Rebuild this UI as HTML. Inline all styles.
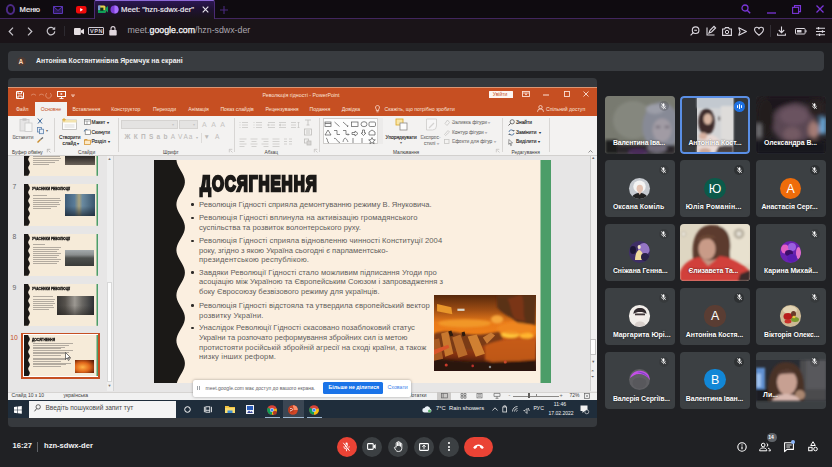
<!DOCTYPE html>
<html lang="uk">
<head>
<meta charset="utf-8">
<title>Meet: "hzn-sdwx-der"</title>
<style>
*{box-sizing:border-box;margin:0;padding:0}
html,body{width:832px;height:467px;overflow:hidden;background:#202124}
body{position:relative;font-family:"Liberation Sans",sans-serif;color:#fff;font-size:8px;line-height:1}
.a{position:absolute}
.t{position:absolute;white-space:nowrap;line-height:1}
svg{position:absolute;overflow:visible}
#tabbar{left:0;top:0;width:832px;height:19px;background:#0f0b10}
#addr{left:0;top:19px;width:832px;height:23.500px;background:#1a1418}
#banner{left:8px;top:51px;width:816px;height:19.500px;border-radius:4px;background:#393c40}
#share{left:8px;top:78.300px;width:588.500px;height:349.200px;border-radius:4px;background:#36393d;overflow:hidden}
#scr{left:0;top:7.700px;width:588.500px;height:332.500px;background:#36393d;overflow:hidden}
#o{left:-8px;top:-86px;width:832px;height:467px}
.tb{top:107.200px;font-size:5.100px;color:#fbe4da}
.rl{font-size:4.900px;color:#252423;-webkit-text-stroke:.12px #252423}
.gl{top:150.700px;font-size:4.800px;color:#3f3d3b}
.sep{top:118px;width:.6px;height:34px;background:#d8d6d4}
.bt{font-size:7.600px;color:#615d5b}
#fire{background:radial-gradient(ellipse 30% 18% at 78% 50%,#ffd773 0,#ffac33 40%,rgba(255,140,30,0) 100%),radial-gradient(ellipse 40% 25% at 30% 35%,#f7a23a 0,rgba(230,120,30,0) 100%),linear-gradient(180deg,#6a2a0c 0,#c8601c 22%,#e88a2a 40%,#b5521a 55%,#5a2a18 72%,#3a2018 100%)}
.p{position:absolute;width:70px;height:57.300px;border-radius:4px;background:#3c4043;overflow:hidden}
.p .n{position:absolute;left:0;right:0;bottom:6.300px;text-align:center;font-weight:bold;font-size:6.900px;white-space:nowrap;color:#fff;text-shadow:0 0 2px rgba(0,0,0,.7)}
.p .av{position:absolute;left:24.450px;top:17.600px;width:21.400px;height:21.400px;border-radius:50%;overflow:hidden;text-align:center;font-size:12.400px;line-height:22.200px;color:#fff}
.p .m{position:absolute;left:54.300px;top:5px;width:10px;height:10px;border-radius:50%;background:rgba(32,33,36,.5)}
</style>
</head>
<body>
<svg width="0" height="0" style="left:0;top:0"><defs><filter id="vb" x="-20%" y="-20%" width="140%" height="140%"><feGaussianBlur stdDeviation="2.200"/></filter><filter id="vb3" x="-20%" y="-20%" width="140%" height="140%"><feGaussianBlur stdDeviation=".55"/></filter><filter id="vb4" x="-20%" y="-20%" width="140%" height="140%"><feGaussianBlur stdDeviation="1.500"/></filter><filter id="vb2" x="-20%" y="-20%" width="140%" height="140%"><feGaussianBlur stdDeviation="1"/></filter></defs></svg>
<div class="a" id="tabbar">
 <div class="a" style="left:0;top:17.5px;width:832px;height:1.100px;background:#42265f"></div>
 <div class="a" style="left:93.5px;top:0;width:121.5px;height:19px;background:linear-gradient(180deg,#2b1652 0,#1f1233 45%,#1a1418 100%);border:1.100px solid #4a2a74;border-top:1.300px solid #8c68d6;border-bottom:none;border-radius:2px 2px 0 0"></div>
 <svg style="left:4.5px;top:4px" width="11" height="11" viewBox="0 0 11 11"><ellipse cx="5.5" cy="5.5" rx="3.6" ry="4.4" fill="none" stroke="#4c2a86" stroke-width="2"/></svg>
 <div class="t" style="left:19.5px;top:5.600px;font-size:7.600px;color:#f1eef4;-webkit-text-stroke:.2px #f1eef4">Меню</div>
 <svg style="left:53px;top:5.5px" width="10" height="8" viewBox="0 0 10 8"><path d="M0.5 0.5h9v7h-9z M0.5 0.5l4.5 4 4.5-4" fill="#2a1a55" stroke="#5a35b5" stroke-width="1"/></svg>
 <svg style="left:76px;top:5.5px" width="10.5" height="7.5" viewBox="0 0 10.5 7.5"><rect width="10.5" height="7.5" rx="2" fill="#f00a0a"/><path d="M4.2 2.1l2.8 1.65-2.8 1.65z" fill="#fff"/></svg>
 <svg style="left:98px;top:5px" width="10" height="8.5" viewBox="0 0 10 8.5"><rect x="0" y="0.5" width="7.5" height="7.5" rx="1.5" fill="#e6d24a"/><rect x="0" y="0.5" width="2.400" height="7.500" fill="#7a9ad0"/><rect x="0" y="5" width="7.5" height="3" fill="#0f9d58"/><rect x="2.2" y="2.6" width="3.2" height="3.2" fill="#14301c"/><path d="M7.5 3l2.5-2v6.5l-2.5-2z" fill="#0f9d58"/></svg>
 <svg style="left:109.5px;top:5px" width="9" height="9" viewBox="0 0 9 9"><circle cx="4.5" cy="4.5" r="4" fill="#7d3fd6"/><path d="M4.5 0.5a4 4 0 0 1 0 8z" fill="#a970ff"/></svg>
 <div class="t" style="left:121px;top:5.600px;font-size:7.700px;color:#f4f2f6;-webkit-text-stroke:.15px #f4f2f6">Meet: "hzn-sdwx-der"</div>
 <svg style="left:201.5px;top:6px" width="7" height="7" viewBox="0 0 7 7"><path d="M0.7 0.7l5.6 5.6M6.3 0.7l-5.6 5.6" stroke="#e9e6ee" stroke-width="1.1"/></svg>
 <svg style="left:220px;top:5.5px" width="8" height="8" viewBox="0 0 8 8"><path d="M4 0v8M0 4h8" stroke="#4a2a7e" stroke-width="1.1"/></svg>
 <svg style="left:741px;top:4px" width="10" height="10" viewBox="0 0 10 10"><circle cx="4" cy="4" r="3" fill="none" stroke="#7a35d8" stroke-width="1.3"/><path d="M6.2 6.2l3 3" stroke="#7a35d8" stroke-width="1.4"/></svg>
 <svg style="left:767px;top:12px" width="9" height="2" viewBox="0 0 9 2"><path d="M0 1h9" stroke="#7a35d8" stroke-width="1.3"/></svg>
 <svg style="left:791.5px;top:4.5px" width="9" height="9" viewBox="0 0 9 9"><rect x="0.6" y="2.4" width="6" height="6" fill="none" stroke="#7a35d8" stroke-width="1.1"/><path d="M2.5 2.4v-1.8h6v6h-1.9" fill="none" stroke="#7a35d8" stroke-width="1.1"/></svg>
 <svg style="left:816px;top:5px" width="8" height="8" viewBox="0 0 8 8"><path d="M0.5 0.5l7 7M7.5 0.5l-7 7" stroke="#7a35d8" stroke-width="1.3"/></svg>
</div>
<div class="a" id="addr">
 <svg style="left:7.5px;top:7.5px" width="6" height="9" viewBox="0 0 6 9"><path d="M5 0.7L1.2 4.5 5 8.3" fill="none" stroke="#c9c6cc" stroke-width="1.2"/></svg>
 <svg style="left:26.5px;top:7.5px" width="6" height="9" viewBox="0 0 6 9"><path d="M1 0.7L4.8 4.5 1 8.3" fill="none" stroke="#c9c6cc" stroke-width="1.2"/></svg>
 <svg style="left:45.5px;top:7px" width="10" height="10" viewBox="0 0 10 10"><path d="M8.3 3.2A3.8 3.8 0 1 0 8.8 5.4" fill="none" stroke="#c9c6cc" stroke-width="1.2"/><path d="M9.2 0.8v3h-3z" fill="#c9c6cc"/></svg>
 <div class="a" style="left:63.5px;top:7px;width:1px;height:10px;background:#2d2a30"></div>
 <svg style="left:74px;top:8.5px" width="10" height="7" viewBox="0 0 10 7"><rect width="6.8" height="7" rx="1" fill="#e6dfe2"/><path d="M7 2.6l3-1.9v5.6l-3-1.9z" fill="#e6dfe2"/></svg>
 <div class="a" style="left:88px;top:7.8px;width:15.5px;height:8.6px;border:1px solid #cfcad2;border-radius:1px"></div>
 <div class="t" style="left:90px;top:9.6px;font-size:5.6px;color:#d5d0d8;letter-spacing:.5px;font-weight:bold">VPN</div>
 <svg style="left:108.5px;top:6.5px" width="8" height="10" viewBox="0 0 8 10"><rect x="0.3" y="4" width="7.4" height="5.6" rx="0.8" fill="#e2d8de"/><path d="M2 4V2.6a2 2 0 0 1 4 0V4" fill="none" stroke="#e2d8de" stroke-width="1.1"/></svg>
 <div class="t" style="left:127.5px;top:7.200px;font-size:8.800px;color:#aaa6ad">meet.<span style="color:#fbfafc;-webkit-text-stroke:.25px #fbfafc">google.com</span>/hzn-sdwx-der</div>
 <!-- right icons -->
 <svg style="left:690px;top:7px" width="10" height="10" viewBox="0 0 10 10"><circle cx="5.6" cy="4.2" r="3.3" fill="none" stroke="#ddd9e0" stroke-width="1.1"/><path d="M3.2 6.6L0.6 9.3M4.2 4.2h2.8" stroke="#ddd9e0" stroke-width="1.1"/></svg>
 <svg style="left:706px;top:7px" width="10" height="10" viewBox="0 0 10 10"><path d="M1 1.5v7.5h7.5M3 7l1-2.6 4-4 1.6 1.6-4 4z" fill="none" stroke="#ddd9e0" stroke-width="1.1"/></svg>
 <svg style="left:722px;top:7.5px" width="10" height="9" viewBox="0 0 10 9"><path d="M0.6 2h2l0.9-1.4h3l0.9 1.4h2v6.4h-8.8z" fill="none" stroke="#ddd9e0" stroke-width="1.1"/><circle cx="5" cy="5" r="1.7" fill="none" stroke="#ddd9e0" stroke-width="1"/></svg>
 <svg style="left:738px;top:7.5px" width="9" height="9" viewBox="0 0 9 9"><path d="M0.8 0.8l7.6 3.7-7.6 3.7 1.2-3.7z" fill="none" stroke="#ddd9e0" stroke-width="1.1" stroke-linejoin="round"/></svg>
 <svg style="left:753.5px;top:7.5px" width="10" height="9" viewBox="0 0 10 9"><path d="M5 8.3C1.5 5.6 0.6 4.2 0.6 2.8a2.2 2.2 0 0 1 4.4-.6 2.2 2.2 0 0 1 4.4.6C9.400 4.2 8.500 5.600 5 8.300z" fill="none" stroke="#ddd9e0" stroke-width="1.1"/></svg>
 <div class="a" style="left:769.5px;top:6px;width:1px;height:12px;background:#343036"></div>
 <svg style="left:777px;top:7px" width="9" height="10" viewBox="0 0 9 10"><path d="M4.500 0.500v6M1.800 4l2.700 2.700L7.200 4M0.600 7.500v1.800h7.800V7.500" fill="none" stroke="#ddd9e0" stroke-width="1.100"/></svg>
 <svg style="left:795px;top:9px" width="12" height="6.500" viewBox="0 0 12 6.500"><rect x="0.500" y="0.500" width="9.600" height="5.500" rx="0.800" fill="none" stroke="#ddd9e0" stroke-width="1"/><rect x="2" y="2" width="4.500" height="2.500" fill="#ddd9e0"/><path d="M11 2.200v2.100" stroke="#ddd9e0" stroke-width="1.100"/></svg>
 <svg style="left:816px;top:7.500px" width="9" height="9" viewBox="0 0 9 9"><path d="M0 1.200h9M0 4.500h9M0 7.800h9" stroke="#ddd9e0" stroke-width="1.100"/><path d="M2.500 0v2.400M6.500 3.300v2.400M3.500 6.600v2.400" stroke="#ddd9e0" stroke-width="1.300"/></svg>
</div>
<div class="a" id="banner">
 <div class="a" style="left:9px;top:6px;width:9px;height:9px;border-radius:50%;background:#4d3b35"></div>
 <div class="t" style="left:10.600px;top:7.500px;font-size:6.500px;font-weight:bold;color:#ffd9b8">A</div>
 <div class="t" style="left:28px;top:7.100px;font-size:6.900px;font-weight:bold;color:#f1f1f2">Антоніна Костянтинівна Яремчук на екрані</div>
</div>
<!-- SHARED SCREEN -->
<div class="a" id="share"><div class="a" id="scr"><div class="a" id="o">
<div class="a" style="left:8px;top:155.400px;width:589px;height:237px;background:#e7e6e6"></div>
<div class="a" style="left:106.500px;top:155.400px;width:6px;height:236px;background:#efefef"></div>
<div class="a" style="left:107px;top:282px;width:5px;height:100px;background:#fdfdfd;border:.5px solid #d8d8d8"></div>
<div class="a" style="left:112.700px;top:155.400px;width:.7px;height:236px;background:#d4d4d4"></div>
<div class="t" style="left:107.500px;top:157px;font-size:4px;color:#777">▲</div>
<div class="t" style="left:107.500px;top:384.500px;font-size:4px;color:#777">▼</div>
<div class="a" style="left:23.5px;top:133.9px;width:74.3px;height:41.8px;background:#f6ebd9;overflow:hidden">
<svg style="left:0;top:0" width="74.3" height="41.8" viewBox="0 0 74.3 41.8"><path d="M0.00 0.00 L4.21 0.00 L4.28 0.42 L4.42 0.84 L4.61 1.27 L4.84 1.69 L5.09 2.11 L5.33 2.53 L5.54 2.96 L5.70 3.38 L5.78 3.80 L5.80 4.22 L5.73 4.64 L5.59 5.07 L5.40 5.49 L5.17 5.91 L4.92 6.33 L4.68 6.76 L4.47 7.18 L4.31 7.60 L4.22 8.02 L4.20 8.44 L4.26 8.87 L4.40 9.29 L4.59 9.71 L4.82 10.13 L5.07 10.56 L5.31 10.98 L5.52 11.40 L5.68 11.82 L5.78 12.24 L5.80 12.67 L5.74 13.09 L5.61 13.51 L5.42 13.93 L5.19 14.36 L4.95 14.78 L4.70 15.20 L4.49 15.62 L4.32 16.04 L4.23 16.47 L4.20 16.89 L4.25 17.31 L4.38 17.73 L4.56 18.16 L4.79 18.58 L5.04 19.00 L5.28 19.42 L5.50 19.84 L5.67 20.27 L5.77 20.69 L5.80 21.11 L5.75 21.53 L5.63 21.96 L5.45 22.38 L5.22 22.80 L4.97 23.22 L4.73 23.64 L4.51 24.07 L4.34 24.49 L4.23 24.91 L4.20 25.33 L4.25 25.76 L4.36 26.18 L4.54 26.60 L4.77 27.02 L5.01 27.44 L5.26 27.87 L5.48 28.29 L5.65 28.71 L5.76 29.13 L5.80 29.56 L5.76 29.98 L5.65 30.40 L5.47 30.82 L5.25 31.24 L5.00 31.67 L4.75 32.09 L4.53 32.51 L4.36 32.93 L4.24 33.36 L4.20 33.78 L4.24 34.20 L4.35 34.62 L4.52 35.04 L4.74 35.47 L4.99 35.89 L5.23 36.31 L5.46 36.73 L5.64 37.16 L5.75 37.58 L5.80 38.00 L5.77 38.42 L5.66 38.84 L5.49 39.27 L5.27 39.69 L5.03 40.11 L4.78 40.53 L4.55 40.96 L4.37 41.38 L4.25 41.80 L0.00 41.80 Z" fill="#1a1816"/><rect x="72.5" y="0" width="1.800" height="41.8" fill="#4c9e69"/></svg>
<div class="a" style="left:9.0px;top:22.0px;width:27.0px;height:.7px;background:#b3aba0"></div>
<div class="a" style="left:9.0px;top:24.0px;width:28.0px;height:.7px;background:#b3aba0"></div>
<div class="a" style="left:9.0px;top:26.0px;width:26.0px;height:.7px;background:#b3aba0"></div>
<div class="a" style="left:9.0px;top:28.0px;width:22.0px;height:.7px;background:#b3aba0"></div>
<div class="a" style="left:9.0px;top:30.0px;width:16.0px;height:.7px;background:#b3aba0"></div>
<div class="a" style="left:41.5px;top:10.0px;width:30.0px;height:21.5px;background:linear-gradient(180deg,#5a5148,#2e2a27 60%,#6a6259)"></div>
</div>
<div class="a" style="left:23.5px;top:184.0px;width:74.3px;height:41.8px;background:#f6ebd9;overflow:hidden">
<svg style="left:0;top:0" width="74.3" height="41.8" viewBox="0 0 74.3 41.8"><path d="M0.00 0.00 L4.21 0.00 L4.28 0.42 L4.42 0.84 L4.61 1.27 L4.84 1.69 L5.09 2.11 L5.33 2.53 L5.54 2.96 L5.70 3.38 L5.78 3.80 L5.80 4.22 L5.73 4.64 L5.59 5.07 L5.40 5.49 L5.17 5.91 L4.92 6.33 L4.68 6.76 L4.47 7.18 L4.31 7.60 L4.22 8.02 L4.20 8.44 L4.26 8.87 L4.40 9.29 L4.59 9.71 L4.82 10.13 L5.07 10.56 L5.31 10.98 L5.52 11.40 L5.68 11.82 L5.78 12.24 L5.80 12.67 L5.74 13.09 L5.61 13.51 L5.42 13.93 L5.19 14.36 L4.95 14.78 L4.70 15.20 L4.49 15.62 L4.32 16.04 L4.23 16.47 L4.20 16.89 L4.25 17.31 L4.38 17.73 L4.56 18.16 L4.79 18.58 L5.04 19.00 L5.28 19.42 L5.50 19.84 L5.67 20.27 L5.77 20.69 L5.80 21.11 L5.75 21.53 L5.63 21.96 L5.45 22.38 L5.22 22.80 L4.97 23.22 L4.73 23.64 L4.51 24.07 L4.34 24.49 L4.23 24.91 L4.20 25.33 L4.25 25.76 L4.36 26.18 L4.54 26.60 L4.77 27.02 L5.01 27.44 L5.26 27.87 L5.48 28.29 L5.65 28.71 L5.76 29.13 L5.80 29.56 L5.76 29.98 L5.65 30.40 L5.47 30.82 L5.25 31.24 L5.00 31.67 L4.75 32.09 L4.53 32.51 L4.36 32.93 L4.24 33.36 L4.20 33.78 L4.24 34.20 L4.35 34.62 L4.52 35.04 L4.74 35.47 L4.99 35.89 L5.23 36.31 L5.46 36.73 L5.64 37.16 L5.75 37.58 L5.80 38.00 L5.77 38.42 L5.66 38.84 L5.49 39.27 L5.27 39.69 L5.03 40.11 L4.78 40.53 L4.55 40.96 L4.37 41.38 L4.25 41.80 L0.00 41.80 Z" fill="#1a1816"/><rect x="72.5" y="0" width="1.800" height="41.8" fill="#4c9e69"/></svg>
<div class="t" style="left:8.500px;top:3px;font-size:4.200px;font-weight:bold;color:#1a1816;-webkit-text-stroke:.35px #1a1816;transform:scaleX(.78);transform-origin:0 0">УЧАСНИКИ РЕВОЛЮЦІЇ</div>
<div class="a" style="left:9.0px;top:11.5px;width:14.0px;height:.7px;background:#b3aba0"></div>
<div class="a" style="left:9.0px;top:14.0px;width:27.0px;height:.7px;background:#b3aba0"></div>
<div class="a" style="left:9.0px;top:16.0px;width:28.0px;height:.7px;background:#b3aba0"></div>
<div class="a" style="left:9.0px;top:18.0px;width:26.0px;height:.7px;background:#b3aba0"></div>
<div class="a" style="left:9.0px;top:20.0px;width:27.0px;height:.7px;background:#b3aba0"></div>
<div class="a" style="left:9.0px;top:22.0px;width:24.0px;height:.7px;background:#b3aba0"></div>
<div class="a" style="left:9.0px;top:24.0px;width:18.0px;height:.7px;background:#b3aba0"></div>
<div class="a" style="left:41.0px;top:9.7px;width:30.5px;height:22.3px;background:linear-gradient(180deg,rgba(0,0,0,0) 55%,rgba(20,28,38,.65) 100%),linear-gradient(90deg,#3e5c78 0,#5a7c98 32%,#a9a27c 47%,#6a8aa0 58%,#3a566e 100%)"></div>
</div>
<div class="t" style="left:12.5px;top:184.3px;font-size:6.800px;color:#666">7</div>
<div class="a" style="left:23.5px;top:234.1px;width:74.3px;height:41.8px;background:#f6ebd9;overflow:hidden">
<svg style="left:0;top:0" width="74.3" height="41.8" viewBox="0 0 74.3 41.8"><path d="M0.00 0.00 L4.21 0.00 L4.28 0.42 L4.42 0.84 L4.61 1.27 L4.84 1.69 L5.09 2.11 L5.33 2.53 L5.54 2.96 L5.70 3.38 L5.78 3.80 L5.80 4.22 L5.73 4.64 L5.59 5.07 L5.40 5.49 L5.17 5.91 L4.92 6.33 L4.68 6.76 L4.47 7.18 L4.31 7.60 L4.22 8.02 L4.20 8.44 L4.26 8.87 L4.40 9.29 L4.59 9.71 L4.82 10.13 L5.07 10.56 L5.31 10.98 L5.52 11.40 L5.68 11.82 L5.78 12.24 L5.80 12.67 L5.74 13.09 L5.61 13.51 L5.42 13.93 L5.19 14.36 L4.95 14.78 L4.70 15.20 L4.49 15.62 L4.32 16.04 L4.23 16.47 L4.20 16.89 L4.25 17.31 L4.38 17.73 L4.56 18.16 L4.79 18.58 L5.04 19.00 L5.28 19.42 L5.50 19.84 L5.67 20.27 L5.77 20.69 L5.80 21.11 L5.75 21.53 L5.63 21.96 L5.45 22.38 L5.22 22.80 L4.97 23.22 L4.73 23.64 L4.51 24.07 L4.34 24.49 L4.23 24.91 L4.20 25.33 L4.25 25.76 L4.36 26.18 L4.54 26.60 L4.77 27.02 L5.01 27.44 L5.26 27.87 L5.48 28.29 L5.65 28.71 L5.76 29.13 L5.80 29.56 L5.76 29.98 L5.65 30.40 L5.47 30.82 L5.25 31.24 L5.00 31.67 L4.75 32.09 L4.53 32.51 L4.36 32.93 L4.24 33.36 L4.20 33.78 L4.24 34.20 L4.35 34.62 L4.52 35.04 L4.74 35.47 L4.99 35.89 L5.23 36.31 L5.46 36.73 L5.64 37.16 L5.75 37.58 L5.80 38.00 L5.77 38.42 L5.66 38.84 L5.49 39.27 L5.27 39.69 L5.03 40.11 L4.78 40.53 L4.55 40.96 L4.37 41.38 L4.25 41.80 L0.00 41.80 Z" fill="#1a1816"/><rect x="72.5" y="0" width="1.800" height="41.8" fill="#4c9e69"/></svg>
<div class="t" style="left:8.500px;top:3px;font-size:4.200px;font-weight:bold;color:#1a1816;-webkit-text-stroke:.35px #1a1816;transform:scaleX(.78);transform-origin:0 0">УЧАСНИКИ РЕВОЛЮЦІЇ</div>
<div class="a" style="left:9.0px;top:10.0px;width:12.0px;height:.7px;background:#b3aba0"></div>
<div class="a" style="left:9.0px;top:13.0px;width:28.0px;height:.7px;background:#b3aba0"></div>
<div class="a" style="left:9.0px;top:15.0px;width:26.0px;height:.7px;background:#b3aba0"></div>
<div class="a" style="left:9.0px;top:17.0px;width:24.0px;height:.7px;background:#b3aba0"></div>
<div class="a" style="left:9.0px;top:19.0px;width:28.0px;height:.7px;background:#b3aba0"></div>
<div class="a" style="left:9.0px;top:21.0px;width:26.0px;height:.7px;background:#b3aba0"></div>
<div class="a" style="left:9.0px;top:23.0px;width:24.0px;height:.7px;background:#b3aba0"></div>
<div class="a" style="left:9.0px;top:25.0px;width:28.0px;height:.7px;background:#b3aba0"></div>
<div class="a" style="left:9.0px;top:27.0px;width:26.0px;height:.7px;background:#b3aba0"></div>
<div class="a" style="left:9.0px;top:29.0px;width:24.0px;height:.7px;background:#b3aba0"></div>
<div class="a" style="left:41.3px;top:15.5px;width:29.0px;height:16.5px;background:linear-gradient(180deg,#a4aaac 0,#8a8e8e 30%,#4e504e 50%,#3a3b39 100%)"></div>
</div>
<div class="t" style="left:12.5px;top:234.4px;font-size:6.800px;color:#666">8</div>
<div class="a" style="left:23.5px;top:284.4px;width:74.3px;height:41.8px;background:#f6ebd9;overflow:hidden">
<svg style="left:0;top:0" width="74.3" height="41.8" viewBox="0 0 74.3 41.8"><path d="M0.00 0.00 L4.21 0.00 L4.28 0.42 L4.42 0.84 L4.61 1.27 L4.84 1.69 L5.09 2.11 L5.33 2.53 L5.54 2.96 L5.70 3.38 L5.78 3.80 L5.80 4.22 L5.73 4.64 L5.59 5.07 L5.40 5.49 L5.17 5.91 L4.92 6.33 L4.68 6.76 L4.47 7.18 L4.31 7.60 L4.22 8.02 L4.20 8.44 L4.26 8.87 L4.40 9.29 L4.59 9.71 L4.82 10.13 L5.07 10.56 L5.31 10.98 L5.52 11.40 L5.68 11.82 L5.78 12.24 L5.80 12.67 L5.74 13.09 L5.61 13.51 L5.42 13.93 L5.19 14.36 L4.95 14.78 L4.70 15.20 L4.49 15.62 L4.32 16.04 L4.23 16.47 L4.20 16.89 L4.25 17.31 L4.38 17.73 L4.56 18.16 L4.79 18.58 L5.04 19.00 L5.28 19.42 L5.50 19.84 L5.67 20.27 L5.77 20.69 L5.80 21.11 L5.75 21.53 L5.63 21.96 L5.45 22.38 L5.22 22.80 L4.97 23.22 L4.73 23.64 L4.51 24.07 L4.34 24.49 L4.23 24.91 L4.20 25.33 L4.25 25.76 L4.36 26.18 L4.54 26.60 L4.77 27.02 L5.01 27.44 L5.26 27.87 L5.48 28.29 L5.65 28.71 L5.76 29.13 L5.80 29.56 L5.76 29.98 L5.65 30.40 L5.47 30.82 L5.25 31.24 L5.00 31.67 L4.75 32.09 L4.53 32.51 L4.36 32.93 L4.24 33.36 L4.20 33.78 L4.24 34.20 L4.35 34.62 L4.52 35.04 L4.74 35.47 L4.99 35.89 L5.23 36.31 L5.46 36.73 L5.64 37.16 L5.75 37.58 L5.80 38.00 L5.77 38.42 L5.66 38.84 L5.49 39.27 L5.27 39.69 L5.03 40.11 L4.78 40.53 L4.55 40.96 L4.37 41.38 L4.25 41.80 L0.00 41.80 Z" fill="#1a1816"/><rect x="72.5" y="0" width="1.800" height="41.8" fill="#4c9e69"/></svg>
<div class="t" style="left:8.500px;top:3px;font-size:4.200px;font-weight:bold;color:#1a1816;-webkit-text-stroke:.35px #1a1816;transform:scaleX(.78);transform-origin:0 0">УЧАСНИКИ РЕВОЛЮЦІЇ</div>
<div class="a" style="left:9.0px;top:12.0px;width:20.0px;height:.7px;background:#b3aba0"></div>
<div class="a" style="left:9.0px;top:15.0px;width:22.0px;height:.7px;background:#b3aba0"></div>
<div class="a" style="left:9.0px;top:17.0px;width:21.0px;height:.7px;background:#b3aba0"></div>
<div class="a" style="left:9.0px;top:19.0px;width:22.0px;height:.7px;background:#b3aba0"></div>
<div class="a" style="left:9.0px;top:21.0px;width:20.0px;height:.7px;background:#b3aba0"></div>
<div class="a" style="left:9.0px;top:23.0px;width:21.0px;height:.7px;background:#b3aba0"></div>
<div class="a" style="left:9.0px;top:25.0px;width:16.0px;height:.7px;background:#b3aba0"></div>
<div class="a" style="left:33.5px;top:11.6px;width:36.7px;height:19.0px;background:linear-gradient(180deg,rgba(0,0,0,0) 50%,rgba(30,28,26,.5) 100%),linear-gradient(90deg,#3a3836 0,#55514c 22%,#9c9892 48%,#6a6864 68%,#2e3034 100%)"></div>
</div>
<div class="t" style="left:12.5px;top:284.7px;font-size:6.800px;color:#666">9</div>
<div class="a" style="left:21.2px;top:332.6px;width:78.9px;height:46.0px;background:#c64f22"></div>
<div class="a" style="left:22.9px;top:334.1px;width:75.5px;height:43.0px;background:#fff"></div>
<div class="a" style="left:23.5px;top:334.7px;width:74.3px;height:41.8px;background:#f6ebd9;overflow:hidden">
<svg style="left:0;top:0" width="74.3" height="41.8" viewBox="0 0 74.3 41.8"><path d="M0.00 0.00 L4.21 0.00 L4.28 0.42 L4.42 0.84 L4.61 1.27 L4.84 1.69 L5.09 2.11 L5.33 2.53 L5.54 2.96 L5.70 3.38 L5.78 3.80 L5.80 4.22 L5.73 4.64 L5.59 5.07 L5.40 5.49 L5.17 5.91 L4.92 6.33 L4.68 6.76 L4.47 7.18 L4.31 7.60 L4.22 8.02 L4.20 8.44 L4.26 8.87 L4.40 9.29 L4.59 9.71 L4.82 10.13 L5.07 10.56 L5.31 10.98 L5.52 11.40 L5.68 11.82 L5.78 12.24 L5.80 12.67 L5.74 13.09 L5.61 13.51 L5.42 13.93 L5.19 14.36 L4.95 14.78 L4.70 15.20 L4.49 15.62 L4.32 16.04 L4.23 16.47 L4.20 16.89 L4.25 17.31 L4.38 17.73 L4.56 18.16 L4.79 18.58 L5.04 19.00 L5.28 19.42 L5.50 19.84 L5.67 20.27 L5.77 20.69 L5.80 21.11 L5.75 21.53 L5.63 21.96 L5.45 22.38 L5.22 22.80 L4.97 23.22 L4.73 23.64 L4.51 24.07 L4.34 24.49 L4.23 24.91 L4.20 25.33 L4.25 25.76 L4.36 26.18 L4.54 26.60 L4.77 27.02 L5.01 27.44 L5.26 27.87 L5.48 28.29 L5.65 28.71 L5.76 29.13 L5.80 29.56 L5.76 29.98 L5.65 30.40 L5.47 30.82 L5.25 31.24 L5.00 31.67 L4.75 32.09 L4.53 32.51 L4.36 32.93 L4.24 33.36 L4.20 33.78 L4.24 34.20 L4.35 34.62 L4.52 35.04 L4.74 35.47 L4.99 35.89 L5.23 36.31 L5.46 36.73 L5.64 37.16 L5.75 37.58 L5.80 38.00 L5.77 38.42 L5.66 38.84 L5.49 39.27 L5.27 39.69 L5.03 40.11 L4.78 40.53 L4.55 40.96 L4.37 41.38 L4.25 41.80 L0.00 41.80 Z" fill="#1a1816"/><rect x="72.5" y="0" width="1.800" height="41.8" fill="#4c9e69"/></svg>
<div class="t" style="left:8.500px;top:3px;font-size:4.200px;font-weight:bold;color:#1a1816;-webkit-text-stroke:.35px #1a1816;transform:scaleX(.78);transform-origin:0 0">ДОСЯГНЕННЯ</div>
<div class="a" style="left:9.0px;top:8.5px;width:40.0px;height:.7px;background:#b3aba0"></div>
<div class="a" style="left:9.0px;top:10.2px;width:36.0px;height:.7px;background:#b3aba0"></div>
<div class="a" style="left:9.0px;top:11.9px;width:32.0px;height:.7px;background:#b3aba0"></div>
<div class="a" style="left:9.0px;top:13.6px;width:28.0px;height:.7px;background:#b3aba0"></div>
<div class="a" style="left:9.0px;top:15.3px;width:40.0px;height:.7px;background:#b3aba0"></div>
<div class="a" style="left:9.0px;top:17.0px;width:36.0px;height:.7px;background:#b3aba0"></div>
<div class="a" style="left:9.0px;top:18.7px;width:32.0px;height:.7px;background:#b3aba0"></div>
<div class="a" style="left:9.0px;top:20.4px;width:28.0px;height:.7px;background:#b3aba0"></div>
<div class="a" style="left:9.0px;top:23.0px;width:38.0px;height:.7px;background:#b3aba0"></div>
<div class="a" style="left:9.0px;top:24.7px;width:33.0px;height:.7px;background:#b3aba0"></div>
<div class="a" style="left:9.0px;top:26.4px;width:28.0px;height:.7px;background:#b3aba0"></div>
<div class="a" style="left:9.0px;top:28.1px;width:38.0px;height:.7px;background:#b3aba0"></div>
<div class="a" style="left:9.0px;top:29.8px;width:33.0px;height:.7px;background:#b3aba0"></div>
<div class="a" style="left:9.0px;top:31.5px;width:28.0px;height:.7px;background:#b3aba0"></div>
<div class="a" style="left:51.7px;top:25.5px;width:19.3px;height:13.0px;background:radial-gradient(ellipse at 40% 55%,#ffb347,#e0661a 45%,#7a2a0c 80%,#3a1608)"></div>
</div>
<div class="t" style="left:10.3px;top:335.0px;font-size:6.800px;color:#c64f22">10</div>
<svg style="left:64.500px;top:352px" width="6" height="9" viewBox="0 0 6 9"><path d="M0.500 0.500v7l1.700-1.600 1.200 2.600 1-.5-1.200-2.500h2.300z" fill="#fff" stroke="#222" stroke-width=".6"/></svg>
<div class="a" style="left:154.0px;top:160.3px;width:397.3px;height:223.2px;background:#fbefe0;overflow:hidden">
<svg style="left:0;top:0" width="397.3" height="223.2" viewBox="0 0 397.3 223.2"><path d="M0.00 0.00 L22.43 0.00 L22.80 2.25 L23.54 4.51 L24.57 6.76 L25.81 9.02 L27.13 11.27 L28.41 13.53 L29.51 15.78 L30.34 18.04 L30.81 20.29 L30.88 22.55 L30.54 24.80 L29.82 27.05 L28.80 29.31 L27.58 31.56 L26.26 33.82 L24.98 36.07 L23.86 38.33 L23.01 40.58 L22.51 42.84 L22.41 45.09 L22.73 47.35 L23.42 49.60 L24.42 51.85 L25.64 54.11 L26.95 56.36 L28.24 58.62 L29.37 60.87 L30.24 63.13 L30.77 65.38 L30.89 67.64 L30.61 69.89 L29.94 72.15 L28.96 74.40 L27.75 76.65 L26.44 78.91 L25.15 81.16 L24.00 83.42 L23.11 85.67 L22.56 87.93 L22.40 90.18 L22.66 92.44 L23.30 94.69 L24.27 96.95 L25.46 99.20 L26.77 101.45 L28.07 103.71 L29.23 105.96 L30.14 108.22 L30.72 110.47 L30.90 112.73 L30.67 114.98 L30.05 117.24 L29.11 119.49 L27.93 121.75 L26.62 124.00 L25.32 126.25 L24.14 128.51 L23.21 130.76 L22.61 133.02 L22.40 135.27 L22.60 137.53 L23.19 139.78 L24.12 142.04 L25.29 144.29 L26.59 146.55 L27.90 148.80 L29.08 151.05 L30.04 153.31 L30.66 155.56 L30.90 157.82 L30.73 160.07 L30.16 162.33 L29.26 164.58 L28.10 166.84 L26.80 169.09 L25.49 171.35 L24.29 173.60 L23.32 175.85 L22.67 178.11 L22.40 180.36 L22.55 182.62 L23.09 184.87 L23.97 187.13 L25.12 189.38 L26.41 191.64 L27.72 193.89 L28.93 196.15 L29.92 198.40 L30.60 200.65 L30.89 202.91 L30.77 205.16 L30.26 207.42 L29.40 209.67 L28.27 211.93 L26.98 214.18 L25.67 216.44 L24.45 218.69 L23.44 220.95 L22.74 223.20 L0.00 223.20 Z" fill="#1b1917"/><rect x="386.5" y="0" width="11" height="223.2" fill="#4c9d68"/></svg>
<div class="t" id="ttl" style="left:45.600px;top:12.800px;font-size:21.600px;font-weight:bold;color:#1b1917;-webkit-text-stroke:2.300px #1b1917;transform:scaleX(.712);transform-origin:0 0;letter-spacing:1.300px">ДОСЯГНЕННЯ</div>
<div class="a" style="left:37.2px;top:43.1px;width:2.600px;height:2.600px;border-radius:50%;background:#2e2b29"></div>
<div class="t bt" style="left:45.0px;top:40.6px;letter-spacing:0.007px">Революція Гідності сприяла демонтуванню режиму В. Януковича.</div>
<div class="a" style="left:37.2px;top:56.6px;width:2.600px;height:2.600px;border-radius:50%;background:#2e2b29"></div>
<div class="t bt" style="left:45.0px;top:54.1px;letter-spacing:0.095px">Революція Гідності вплинула на активізацію громадянського</div>
<div class="t bt" style="left:45.0px;top:63.8px;letter-spacing:0.044px">суспільства та розвиток волонтерського руху.</div>
<div class="a" style="left:37.2px;top:79.3px;width:2.600px;height:2.600px;border-radius:50%;background:#2e2b29"></div>
<div class="t bt" style="left:45.0px;top:76.8px;letter-spacing:0.076px">Революція Гідності сприяла відновленню чинності Конституції 2004</div>
<div class="t bt" style="left:45.0px;top:86.5px;letter-spacing:0.001px">року, згідно з якою Україна сьогодні є парламентсько-</div>
<div class="t bt" style="left:45.0px;top:96.2px;letter-spacing:0.176px">президентською республікою.</div>
<div class="a" style="left:37.2px;top:110.9px;width:2.600px;height:2.600px;border-radius:50%;background:#2e2b29"></div>
<div class="t bt" style="left:45.0px;top:108.4px;letter-spacing:0.050px">Завдяки Революції Гідності стало можливим підписання Угоди про</div>
<div class="t bt" style="left:45.0px;top:118.1px;letter-spacing:0.025px">асоціацію між Україною та Європейським Союзом і запровадження з</div>
<div class="t bt" style="left:45.0px;top:127.8px;letter-spacing:0.028px">боку Євросоюзу безвізового режиму для українців.</div>
<div class="a" style="left:37.2px;top:144.2px;width:2.600px;height:2.600px;border-radius:50%;background:#2e2b29"></div>
<div class="t bt" style="left:45.0px;top:141.7px;letter-spacing:0.043px">Революція Гідності відстояла та утвердила європейський вектор</div>
<div class="t bt" style="left:45.0px;top:151.4px;letter-spacing:0.164px">розвитку України.</div>
<div class="a" style="left:37.2px;top:166.6px;width:2.600px;height:2.600px;border-radius:50%;background:#2e2b29"></div>
<div class="t bt" style="left:45.0px;top:164.1px;letter-spacing:0.006px">Унаслідок Революції Гідності скасовано позаблоковий статус</div>
<div class="t bt" style="left:45.0px;top:173.8px;letter-spacing:-0.040px">України та розпочато реформування збройних сил із метою</div>
<div class="t bt" style="left:45.0px;top:183.5px;letter-spacing:0.052px">протистояти російській збройній агресії на сході країни, а також</div>
<div class="t bt" style="left:45.0px;top:193.2px;letter-spacing:0.175px">низку інших реформ.</div>
<div class="a" id="fire" style="left:279.8px;top:134.7px;width:101.800px;height:76px;overflow:hidden"><svg style="left:0;top:0" width="101.800" height="76" viewBox="0 0 100 75" preserveAspectRatio="none">
<defs>
<linearGradient id="fg" x1="0" y1="0" x2="0" y2="1"><stop offset="0" stop-color="#55280c"/><stop offset=".2" stop-color="#a04e13"/><stop offset=".36" stop-color="#e87a1a"/><stop offset=".5" stop-color="#ee7e18"/><stop offset=".6" stop-color="#b84c16"/><stop offset=".8" stop-color="#7c2e10"/><stop offset=".92" stop-color="#3a180c"/><stop offset="1" stop-color="#2a1008"/></linearGradient>
<filter id="fb" x="-10%" y="-10%" width="120%" height="120%"><feGaussianBlur stdDeviation="1.300"/></filter>
<filter id="fb2" x="-10%" y="-10%" width="120%" height="120%"><feGaussianBlur stdDeviation=".6"/></filter>
<clipPath id="fc"><rect width="100" height="75"/></clipPath>
</defs>
<g clip-path="url(#fc)">
<rect width="100" height="75" fill="url(#fg)"/>
<g filter="url(#fb)">
<path d="M62 0h38v30c-8-3-14 2-20-4s-12-6-18-14z" fill="#5a3018"/>
<path d="M72 4c4 6 3 14 8 20l10 2c-4-8 0-18-4-26z" fill="#7a3418"/>
<ellipse cx="75" cy="39" rx="9" ry="3.500" fill="#ffc83a"/>
<ellipse cx="91" cy="40" rx="7" ry="3" fill="#ffb52e"/>
<ellipse cx="80" cy="33" rx="18" ry="6" fill="#f08a20" opacity=".8"/>
<ellipse cx="30" cy="28" rx="26" ry="4" fill="#f29a2a" opacity=".9"/>
<ellipse cx="62" cy="24" rx="6" ry="4" fill="#f6a63a"/>
<path d="M0 38c10-3 18-2 28 0s20 2 36-2l4 8-30 10-38 4z" fill="#7a3a18"/>
<path d="M50 50c12-6 30-8 50-6v26c-16 2-34 0-50-6z" fill="#c85c1a" opacity=".9"/>
<path d="M0 62c20 4 50 6 100 2v11H0z" fill="#2c1209"/>
</g>
<g filter="url(#fb2)">
<path d="M3 9l14 3 1 7-15-3z" fill="#e8962a"/>
<rect x="23" y="13.500" width="7" height="2.200" fill="#d9d4c8"/>
<path d="M7 38l7-2 5 22-8 3z" fill="#c8782e"/><path d="M18 42l8-3 7 20-9 3z" fill="#b86a2a"/><path d="M33 41l9-2 8 19-9 3z" fill="#d08030"/><path d="M0 44l5-1 4 20-9 2z" fill="#a85a24"/>
<path d="M48 42l8-5 4 3-8 8z" fill="#c87a34"/>
<path d="M0 54l14-5 1 3-15 7z" fill="#d8542a"/>
<path d="M14 36l3-1 2 5-3 1zM27 37l3-1 1 4-3 1z" fill="#2e1a10"/>
<circle cx="12" cy="69" r="1.500" fill="#c83a2a"/><circle cx="38" cy="70" r="1.300" fill="#b8302a"/><circle cx="70" cy="66" r="1.500" fill="#c8482a"/><circle cx="55" cy="71" r="1.200" fill="#8a8a8a"/>
</g>
</g>
</svg>
</div>
</div>
<div class="a" style="left:589.500px;top:155.400px;width:7.500px;height:236px;background:#f0f0f0;border-left:.6px solid #cfcfcf"></div>
<div class="a" style="left:590.300px;top:339.500px;width:6px;height:16px;background:#fff;border:.5px solid #c4c4c4"></div>
<div class="t" style="left:591.300px;top:156.500px;font-size:4px;color:#666">▲</div>
<div class="t" style="left:591.300px;top:360.500px;font-size:4px;color:#666">▼</div>
<div class="t" style="left:591.300px;top:369px;font-size:4px;color:#666">⏶</div>
<div class="t" style="left:591.300px;top:375px;font-size:4px;color:#666">⏷</div>
<!-- PowerPoint title bar + tabs -->
<div class="a" style="left:8px;top:86.600px;width:589px;height:29.400px;background:#c64f22"></div>
<svg style="left:16px;top:91.5px" width="8" height="8" viewBox="0 0 8 8"><path d="M0.5 0.5h5.8l1.2 1.2v5.8h-7z" fill="none" stroke="#fff" stroke-width="1"/><path d="M2 0.5v2.3h3.5V0.5M2 7.500V5h4v2.500" fill="none" stroke="#fff" stroke-width=".9"/></svg>
<svg style="left:30px;top:92px" width="24" height="7" viewBox="0 0 24 7" opacity=".45"><path d="M1 3.500a3 3 0 0 1 5 0M9 3.500a3 3 0 0 1 5 0M17 1a2.800 2.800 0 1 0 3 0" fill="none" stroke="#f6c9b6" stroke-width="1"/></svg>
<svg style="left:57px;top:91.500px" width="9" height="8" viewBox="0 0 9 8"><rect x="0.500" y="0.500" width="8" height="5" fill="none" stroke="#fff" stroke-width="1"/><path d="M4.500 5.500v2M2.500 7.500h4" stroke="#fff" stroke-width=".9"/><path d="M3.600 1.800l2.200 1.200-2.200 1.200z" fill="#fff"/></svg>
<svg style="left:71px;top:94.500px" width="4" height="3" viewBox="0 0 4 3"><path d="M0 0.500h4M0.500 1.500l1.500 1.500 1.500-1.500z" fill="#f3c3ae" stroke="#f3c3ae" stroke-width=".5"/></svg>
<div class="t" style="left:262.500px;top:93.300px;font-size:5.250px;color:#fbe4da">Революція гідності  -  PowerPoint</div>
<div class="a" style="left:488.500px;top:91px;width:24px;height:7.500px;background:#fdf6f2;border-radius:.5px"></div>
<div class="t" style="left:492.800px;top:92.400px;font-size:5px;color:#c64f22">Увійти</div>
<svg style="left:522px;top:91.500px" width="8" height="6" viewBox="0 0 8 6"><rect x="0.500" y="0.500" width="7" height="5" fill="none" stroke="#fbe0d4" stroke-width=".9"/><path d="M0.500 2h7M4 2v1.800M2.800 3l1.200 1 1.200-1" fill="none" stroke="#fbe0d4" stroke-width=".8"/></svg>
<svg style="left:543px;top:94px" width="6" height="2" viewBox="0 0 6 2"><path d="M0 1h6" stroke="#fbe0d4" stroke-width="1"/></svg>
<svg style="left:563.500px;top:91.500px" width="6" height="6" viewBox="0 0 6 6"><rect x="0.500" y="0.500" width="5" height="5" fill="none" stroke="#fbe0d4" stroke-width=".9"/></svg>
<svg style="left:583px;top:91.500px" width="6" height="6" viewBox="0 0 6 6"><path d="M0.500 0.500l5 5M5.500 0.500l-5 5" stroke="#fbe0d4" stroke-width=".9"/></svg>
<div class="a" style="left:8px;top:86.600px;width:589px;height:.8px;background:#dd9673"></div>
<!-- tabs -->
<div class="a" style="left:35px;top:102.300px;width:31.500px;height:14px;background:#f3f2f1"></div>
<div class="t tb" style="left:16.0px">Файл</div>
<div class="t tb" style="left:40.7px;color:#c64f22">Основне</div>
<div class="t tb" style="left:72.4px">Вставлення</div>
<div class="t tb" style="left:111.3px">Конструктор</div>
<div class="t tb" style="left:153.0px">Переходи</div>
<div class="t tb" style="left:188.3px">Анімація</div>
<div class="t tb" style="left:220.4px">Показ слайдів</div>
<div class="t tb" style="left:265.4px">Рецензування</div>
<div class="t tb" style="left:309.6px">Подання</div>
<div class="t tb" style="left:341.8px">Довідка</div>
<svg style="left:374.500px;top:105px" width="5" height="8" viewBox="0 0 5 8"><path d="M2.500 0.500a2 2 0 0 1 1.200 3.600v1.400h-2.400V4.100A2 2 0 0 1 2.500 0.500zM1.500 6.800h2" fill="none" stroke="#fbe0d4" stroke-width=".8"/></svg>
<div class="t tb" style="left:384.6px">Скажіть, що потрібно зробити</div>
<svg style="left:537px;top:105.500px" width="7" height="7" viewBox="0 0 7 7"><circle cx="3.500" cy="2.200" r="1.700" fill="none" stroke="#fbe0d4" stroke-width=".8"/><path d="M0.500 6.800a3 3 0 0 1 6 0" fill="none" stroke="#fbe0d4" stroke-width=".8"/></svg>
<div class="t tb" style="left:546.0px">Спільний доступ</div>
<!-- ribbon body -->
<div class="a" style="left:8px;top:115.800px;width:589px;height:39px;background:#f3f2f1"></div>
<div class="a" style="left:8px;top:154.600px;width:589px;height:.8px;background:#d2d0ce"></div>
<!-- group separators -->
<div class="a sep" style="left:53.500px"></div><div class="a sep" style="left:117.500px"></div><div class="a sep" style="left:233.500px"></div><div class="a sep" style="left:319px"></div><div class="a sep" style="left:501.500px"></div><div class="a sep" style="left:548.500px"></div>
<!-- clipboard -->
<svg style="left:19px;top:118.500px" width="14" height="14" viewBox="0 0 14 14" opacity=".55"><rect x="1" y="1.500" width="9" height="11.500" fill="#dcdcdc" stroke="#a9a9a9" stroke-width=".8"/><rect x="3.500" y="0.300" width="4" height="2.400" fill="#9d9d9d"/><rect x="6" y="5" width="7" height="8.500" fill="#fafafa" stroke="#a9a9a9" stroke-width=".8"/></svg>
<div class="t rl" style="left:12.500px;top:135.700px;color:#b5b3b1">Вставити</div>
<svg style="left:37px;top:118.500px" width="6" height="6" viewBox="0 0 6 6"><path d="M0.800 0.500l4.200 5M5.200 0.500l-4.200 5" stroke="#3e6a9c" stroke-width="1"/></svg>
<svg style="left:36.500px;top:127.500px" width="7" height="7" viewBox="0 0 7 7"><rect x="0.500" y="0.500" width="4" height="4.500" fill="#e8eef6" stroke="#5c82ad" stroke-width=".8"/><rect x="2.500" y="2.200" width="4" height="4.500" fill="#e8eef6" stroke="#5c82ad" stroke-width=".8"/></svg>
<div class="t" style="left:45.500px;top:129.500px;font-size:4px;color:#666">▾</div>
<svg style="left:37px;top:137.500px" width="7" height="6" viewBox="0 0 7 6"><path d="M0.500 5.500l3-3" stroke="#c98c2c" stroke-width="1.400"/><path d="M3.500 2.500l2.500-2" stroke="#666" stroke-width="1.200"/></svg>
<div class="t gl" style="left:12px">Буфер обміну</div>
<svg style="left:46.500px;top:149.500px" width="4" height="4" viewBox="0 0 4 4"><path d="M0.300 0.300h3M0.300 0.300v3M1.500 1.500l2 2" stroke="#8a8886" stroke-width=".5" fill="none"/></svg>
<!-- slides -->
<svg style="left:61.500px;top:118.500px" width="15" height="12" viewBox="0 0 15 12"><rect x="0.500" y="2" width="14" height="9.500" fill="#fdfdfd" stroke="#b9b7b5" stroke-width=".8"/><rect x="0.500" y="2" width="14" height="2.500" fill="#f3e4b0"/><path d="M2 0v3.500M0.300 1.700h3.500" stroke="#e0a526" stroke-width=".9"/><path d="M2.500 7h10M2.500 9h10" stroke="#c8c6c4" stroke-width=".6"/></svg>
<div class="t rl" style="left:59px;top:135.700px">Створити</div>
<div class="t rl" style="left:62.500px;top:141.600px">слайд <span style="font-size:4px">▾</span></div>
<svg style="left:83.500px;top:119px" width="7" height="6" viewBox="0 0 7 6"><rect x="0.400" y="0.400" width="6.200" height="5.200" fill="#fff" stroke="#777" stroke-width=".7"/><path d="M0.400 2h6.200M3 2v3.600" stroke="#777" stroke-width=".6"/></svg>
<div class="t rl" style="left:91.500px;top:120.600px">Макет <span style="font-size:4px">▾</span></div>
<svg style="left:83.500px;top:129px" width="7" height="6" viewBox="0 0 7 6"><rect x="1.200" y="1" width="5.400" height="4.500" fill="#fff" stroke="#777" stroke-width=".7"/><path d="M0.300 2.500a2 2 0 0 1 3-1.800" fill="none" stroke="#3e6a9c" stroke-width=".9"/></svg>
<div class="t rl" style="left:91.500px;top:130.900px">Скинути</div>
<svg style="left:83.500px;top:139.200px" width="7" height="6" viewBox="0 0 7 6"><rect x="0.400" y="1.200" width="6.200" height="4.400" fill="#fce9c7" stroke="#d28a1f" stroke-width=".7"/><path d="M0.400 0.500h3" stroke="#d28a1f" stroke-width=".8"/></svg>
<div class="t rl" style="left:91.500px;top:140.300px">Розділ <span style="font-size:4px">▾</span></div>
<div class="t gl" style="left:78px">Слайди</div>
<!-- font -->
<div class="a" style="left:121px;top:120.500px;width:57px;height:9px;background:#e4e3e2;border:.5px solid #d5d3d1"></div>
<div class="a" style="left:179px;top:120.500px;width:19px;height:9px;background:#e4e3e2;border:.5px solid #d5d3d1"></div>
<div class="t" style="left:172px;top:123px;font-size:4px;color:#c6c4c2">▾</div><div class="t" style="left:192.500px;top:123px;font-size:4px;color:#c6c4c2">▾</div>
<div class="t" style="left:202px;top:121px;font-size:7px;color:#c7c5c3;letter-spacing:4.500px">AAA</div>
<div class="t" style="left:124.500px;top:134.500px;font-size:6.500px;color:#bdbbb9;letter-spacing:3.300px;font-weight:bold">ЖКПSab<span style="font-weight:normal">AV</span></div>
<div class="t" style="left:183.500px;top:134.500px;font-size:6.500px;color:#bdbbb9;letter-spacing:1px">Aa<span style="font-size:4px"> ▾</span></div>
<div class="t" style="left:203.500px;top:134.500px;font-size:6.500px;color:#bdbbb9;letter-spacing:5px">▼A</div>
<div class="a" style="left:200.500px;top:133px;width:.6px;height:10px;background:#dddbd9"></div>
<div class="t gl" style="left:163px">Шрифт</div>
<!-- paragraph -->
<svg style="left:239px;top:120.600px" width="72" height="26" viewBox="0 0 72 26" opacity=".6"><g stroke="#aeacaa" stroke-width=".8" fill="none"><path d="M3 1.500h6M3 4h6M3 6.500h6M0.500 1.500h1M0.500 4h1M0.500 6.500h1"/><path d="M17 1.500h6M17 4h6M17 6.500h6M14.500 1.500h1M14.500 4h1M14.500 6.500h1"/><path d="M29 1.500h7M31.500 4h4.500M29 6.500h7M29 3l1.500 1-1.500 1z"/><path d="M40 1.500h7M42.500 4h4.500M40 6.500h7M41.500 3l-1.500 1 1.500 1z"/><path d="M52 1.500h5M52 4h5M52 6.500h5M59.500 1v6M58.500 2l1-1 1 1M58.500 6l1 1 1-1"/><path d="M0.500 18h7M0.500 20.500h5M0.500 23h7M0.500 25.500h5"/><path d="M11.500 18h7M12.500 20.500h5M11.500 23h7M12.500 25.500h5"/><path d="M22.500 18h7M24.500 20.500h5M22.500 23h7M24.500 25.500h5"/><path d="M33.500 18h7M33.500 20.500h7M33.500 23h7M33.500 25.500h7"/><path d="M45 18h3M45 20.500h3M45 23h3M50 18h3M50 20.500h3M50 23h3"/></g></svg>
<svg style="left:303px;top:118.500px" width="10" height="28" viewBox="0 0 10 28" opacity=".65"><g stroke="#a3a19f" stroke-width=".8" fill="none"><path d="M2 2h6M5 2v5M3.500 7h3"/><rect x="1.500" y="11" width="7" height="6"/><path d="M3 13h4M3 15h4"/><rect x="1.500" y="21" width="4" height="4"/><rect x="4" y="23" width="4" height="4" fill="#c9c7c5"/></g></svg>
<div class="t gl" style="left:264.500px">Абзац</div>
<svg style="left:228.500px;top:149.500px" width="4" height="4" viewBox="0 0 4 4"><path d="M0.300 0.300h3M0.300 0.300v3M1.500 1.500l2 2" stroke="#a9a7a5" stroke-width=".5" fill="none"/></svg>
<svg style="left:313.500px;top:149.500px" width="4" height="4" viewBox="0 0 4 4"><path d="M0.300 0.300h3M0.300 0.300v3M1.500 1.500l2 2" stroke="#a9a7a5" stroke-width=".5" fill="none"/></svg>
<!-- drawing -->
<div class="a" style="left:322.500px;top:118.500px;width:60.500px;height:25.500px;background:#fdfdfd;border:.6px solid #cfcdcb"></div>
<div class="a" style="left:377px;top:118.500px;width:6px;height:25.500px;background:#ecebea;border-left:.5px solid #d5d3d1"></div>
<svg style="left:324px;top:120.600px" width="52" height="24" viewBox="0 0 52 24"><g stroke="#555" stroke-width=".7" fill="none"><rect x="1" y="1" width="6" height="4.500"/><path d="M1 2.500h6"/><path d="M10.500 1l5 4.500M19 1l5 4.500M23 5.500l1-0.200-.2-1"/><rect x="27.500" y="1" width="6.500" height="4.500"/><ellipse cx="40" cy="3.200" rx="3" ry="2.500"/><rect x="45" y="1" width="6.500" height="4.500" rx="1.200"/><path d="M1 14l3-5 3 5zM10 9.500h3v4h3M19 9.500h3v4h3l-1-1m1 1l-1 1M28 11.500h3v-1.500l3 2.500-3 2.500v-1.500h-3zM38.500 9v3h-1.500l2.500 2.500 2.500-2.500h-1.500v-3zM45 14v-3l3-2 3 2v3z"/><path d="M2 17c2 0 1 5 3 5M10 17.500c3-1 3 4 6 4M19 21c1-5 3-5 5 0M29 17v5M38 17v5M48 16.500l1 2.200 2.300.2-1.800 1.500.600 2.300-2.100-1.300-2.100 1.300.600-2.300-1.800-1.500 2.300-.2z"/></g></svg>
<svg style="left:394.500px;top:118.500px" width="13" height="13" viewBox="0 0 13 13"><rect x="1" y="1" width="7" height="6" fill="#f9e6a8" stroke="#d9a521" stroke-width=".8"/><rect x="5" y="5" width="7" height="7" fill="#fdfdfd" stroke="#8c8a88" stroke-width=".8"/></svg>
<div class="t rl" style="left:385.500px;top:135.700px">Упорядкувати</div>
<div class="t" style="left:400px;top:141px;font-size:4px;color:#666">▾</div>
<svg style="left:425px;top:118.500px" width="13" height="13" viewBox="0 0 13 13" opacity=".6"><path d="M1.500 1h10v7a4 4 0 0 1-4 4h-6z" fill="#fafafa" stroke="#b5b3b1" stroke-width=".8"/><path d="M4 10l5-5" stroke="#c2c0be" stroke-width="1.200"/></svg>
<div class="t rl" style="left:420.500px;top:135.700px;color:#c2c0be">Експрес-</div>
<div class="t rl" style="left:424px;top:141.600px;color:#c2c0be">стилі <span style="font-size:4px">▾</span></div>
<svg style="left:444px;top:119px" width="6" height="26" viewBox="0 0 6 26" opacity=".55"><g fill="none" stroke="#a3a19f" stroke-width=".8"><path d="M1 4.500l2.500-3.500 2 2.500-2.500 3z"/><path d="M0.500 15.500l3.500-4 1.500 1.500-4 3.500z"/><rect x="0.500" y="20.500" width="4.500" height="4" /></g></svg>
<div class="t rl" style="left:452px;top:120.600px;color:#c2c0be">Заливка фігури <span style="font-size:4px">▾</span></div>
<div class="t rl" style="left:452px;top:130.900px;color:#c2c0be">Контур фігури <span style="font-size:4px">▾</span></div>
<div class="t rl" style="left:452px;top:140.300px;color:#c2c0be">Ефекти для фігур <span style="font-size:4px">▾</span></div>
<div class="t gl" style="left:393px">Малювання</div>
<svg style="left:496px;top:149.500px" width="4" height="4" viewBox="0 0 4 4"><path d="M0.300 0.300h3M0.300 0.300v3M1.500 1.500l2 2" stroke="#a9a7a5" stroke-width=".5" fill="none"/></svg>
<!-- editing -->
<svg style="left:507.500px;top:119px" width="7" height="7" viewBox="0 0 7 7"><circle cx="4.200" cy="2.800" r="2.100" fill="none" stroke="#555" stroke-width=".8"/><path d="M2.700 4.300l-2.200 2.200" stroke="#555" stroke-width=".9"/></svg>
<div class="t rl" style="left:516px;top:120.600px">Знайти</div>
<svg style="left:507.500px;top:129px" width="7" height="7" viewBox="0 0 7 7"><path d="M1 3a2.300 2.300 0 0 1 4.500-.5M6 4a2.300 2.300 0 0 1-4.500.5" fill="none" stroke="#3e6a9c" stroke-width=".8"/><path d="M0.500 5.500h2M4.500 1.500h2" stroke="#555" stroke-width=".8"/></svg>
<div class="t rl" style="left:516px;top:130.900px">Замінити &nbsp;<span style="font-size:4px">▾</span></div>
<svg style="left:508px;top:139px" width="6" height="7" viewBox="0 0 6 7"><path d="M1 0.500l3.500 3.500h-2l1 2.300-.8.300-1-2.300-1 1z" fill="#fff" stroke="#555" stroke-width=".6"/></svg>
<div class="t rl" style="left:516px;top:140.300px">Виділити <span style="font-size:4px">▾</span></div>
<div class="t gl" style="left:511.500px">Редагування</div>
<svg style="left:587.500px;top:150.500px" width="5" height="3" viewBox="0 0 5 3"><path d="M0.500 2.500l2-2 2 2" fill="none" stroke="#666" stroke-width=".7"/></svg>

<!-- status bar -->
<div class="a" style="left:8px;top:391.700px;width:589px;height:8.600px;background:#f1f1f1;border-top:.6px solid #d6d4d2"></div>
<div class="t" style="left:11.500px;top:393.300px;font-size:5px;color:#3a3a3a">Слайд 10 з 10</div>
<div class="t" style="left:63.500px;top:393.300px;font-size:5px;color:#3a3a3a">українська</div>
<div class="t" style="left:408px;top:393.300px;font-size:5px;color:#3a3a3a">Нотатки</div>
<div class="a" style="left:437px;top:392.300px;width:13.500px;height:7.500px;background:#cbc9c7"></div>
<svg style="left:440.500px;top:393.500px" width="60" height="5.500" viewBox="0 0 60 5.500"><g fill="none" stroke="#666" stroke-width=".7"><rect x="0.400" y="0.400" width="6" height="4.500"/><path d="M2.200 0.400v4.500"/><path d="M20 0.500h2v2h-2zM23 0.500h2v2h-2zM20 3.200h2v2h-2zM23 3.200h2v2h-2z"/><rect x="36" y="0.400" width="5" height="4.500"/><path d="M37 1.800h3M37 3.200h3"/><path d="M53 0.400h6v3h-6zM56 3.400v2M54.500 5.300h3"/></g></svg>
<div class="a" style="left:513px;top:395.700px;width:46px;height:.6px;background:#8a8886"></div>
<div class="t" style="left:508.500px;top:393px;font-size:5.500px;color:#666">-</div>
<div class="t" style="left:559.500px;top:393px;font-size:5.500px;color:#666">+</div>
<div class="a" style="left:528.300px;top:393px;width:1.800px;height:5.500px;background:#605e5c"></div>
<div class="a" style="left:536px;top:394.500px;width:.6px;height:2.500px;background:#8a8886"></div>
<div class="t" style="left:569.500px;top:393.300px;font-size:5px;color:#3a3a3a">72%</div>
<svg style="left:583.500px;top:393.300px" width="6" height="6" viewBox="0 0 6 6"><rect x="0.400" y="0.400" width="5" height="5" fill="none" stroke="#666" stroke-width=".7"/><path d="M1.800 1.800l2.400 2.400M4.200 1.800l-2.400 2.400" stroke="#666" stroke-width=".5"/></svg>
<!-- chrome sharing notification -->
<div class="a" style="left:193px;top:380px;width:218.300px;height:16.600px;background:#fff;border-radius:2px;box-shadow:0 0 3px rgba(0,0,0,.35)"></div>
<div class="a" style="left:197.300px;top:385.800px;width:.8px;height:4.500px;background:#9aa0a6"></div><div class="a" style="left:198.900px;top:385.800px;width:.8px;height:4.500px;background:#9aa0a6"></div>
<div class="t" style="left:205.500px;top:385.600px;font-size:5px;color:#5f6368">meet.google.com має доступ до вашого екрана.</div>
<div class="a" style="left:322.800px;top:381.600px;width:60.200px;height:12.400px;background:#1a73e8;border-radius:1.500px"></div>
<div class="t" style="left:328.500px;top:385.300px;font-size:5.200px;color:#fff;font-weight:bold">Більше не ділитися</div>
<div class="t" style="left:387.500px;top:385.300px;font-size:5.300px;color:#3b82ea">Сховати</div>
<!-- windows taskbar -->
<div class="a" style="left:8px;top:400px;width:589px;height:18.400px;background:#1f2d3b"></div>
<svg style="left:14px;top:405.700px" width="7.800" height="7.800" viewBox="0 0 10 10"><path d="M0 1.400l4.200-.6v3.900H0zM4.900.7L10 0v4.700H4.900zM0 5.400h4.200v3.900L0 8.700zM4.900 5.400H10V10l-5.100-.7z" fill="#fff"/></svg>
<div class="a" style="left:28.600px;top:401.200px;width:147.800px;height:17px;background:#f4f4f4"></div>
<svg style="left:34px;top:404.500px" width="7" height="8" viewBox="0 0 7 8"><circle cx="4.200" cy="2.900" r="2.200" fill="none" stroke="#444" stroke-width=".8"/><path d="M2.600 4.600L0.500 7.300" stroke="#444" stroke-width=".9"/></svg>
<div class="t" style="left:45.500px;top:405.500px;font-size:6.550px;color:#4a4a4a">Введіть пошуковий запит тут</div>
<svg style="left:183.500px;top:406px" width="7" height="7" viewBox="0 0 7 7"><circle cx="3.500" cy="3.500" r="2.800" fill="none" stroke="#fff" stroke-width="1"/></svg>
<svg style="left:204px;top:406px" width="8" height="7" viewBox="0 0 8 7"><rect x="1.800" y="0.800" width="4" height="5.400" fill="none" stroke="#fff" stroke-width=".8"/><path d="M0.400 0.800v5.400M7.500 0.800v5.400M1.800 4.300h4" stroke="#fff" stroke-width=".8"/></svg>
<svg style="left:225px;top:405.500px" width="10" height="8" viewBox="0 0 10 8"><path d="M0 1h3.500l1 1H10v6H0z" fill="#f5c542"/><rect x="0" y="3" width="10" height="5" fill="#fbdc6e"/><rect x="2.500" y="5.500" width="5" height="2.500" fill="#3c8fd6"/></svg>
<svg style="left:245.500px;top:405px" width="8" height="9" viewBox="0 0 8 9"><rect width="8" height="9" fill="#f2f4f8"/><rect x="1" y="1" width="6" height="4" fill="#2b5db8"/><path d="M1 8l2-2.500 1.500 1.500 1-1L7 8z" fill="#3a4a9a"/></svg>
<svg style="left:267px;top:405px" width="10" height="10" viewBox="0 0 10 10"><circle cx="5" cy="5" r="4.800" fill="#db4437"/><path d="M5 5L0.800 2.600A4.800 4.800 0 0 0 5 9.800z" fill="#0f9d58"/><path d="M5 5l0 4.800A4.800 4.800 0 0 0 9.600 3.500z" fill="#f4c20d"/><circle cx="5" cy="5" r="2.100" fill="#e8e8e8"/><circle cx="5" cy="5" r="1.600" fill="#4285f4"/><circle cx="7.800" cy="7.800" r="2" fill="#b23a2a"/></svg>
<div class="a" style="left:264.500px;top:416.600px;width:15px;height:.9px;background:#9db7d1"></div>
<div class="a" style="left:282.500px;top:400px;width:21px;height:17.700px;background:#3b4653"></div>
<div class="a" style="left:282.500px;top:416.600px;width:21px;height:.9px;background:#9db7d1"></div>
<svg style="left:288px;top:405px" width="10" height="10" viewBox="0 0 10 10"><circle cx="5" cy="5" r="4.800" fill="#d24726"/><path d="M5 0.200A4.800 4.800 0 0 1 9.800 5H5z" fill="#ff8f6b"/><rect x="0.500" y="2.500" width="5" height="5" fill="#b7391c"/><path d="M2 3.500h1.500a1 1 0 0 1 0 2H2.600v1" fill="none" stroke="#fff" stroke-width=".7"/></svg>
<svg style="left:309px;top:405px" width="10" height="10" viewBox="0 0 10 10"><circle cx="5" cy="5" r="4.800" fill="#db4437"/><path d="M5 5L0.800 2.600A4.800 4.800 0 0 0 5 9.800z" fill="#0f9d58"/><path d="M5 5l0 4.800A4.800 4.800 0 0 0 9.600 3.500z" fill="#f4c20d"/><circle cx="5" cy="5" r="2.100" fill="#e8e8e8"/><circle cx="5" cy="5" r="1.600" fill="#4285f4"/></svg>
<div class="a" style="left:306.500px;top:416.600px;width:15px;height:.9px;background:#9db7d1"></div>
<!-- tray -->
<svg style="left:422px;top:405px" width="10" height="8" viewBox="0 0 10 8"><path d="M2.500 7.500a2.200 2.200 0 0 1 0-4.400 3 3 0 0 1 5.700.600 2 2 0 0 1-.2 3.800z" fill="#e9f1f7"/><circle cx="7.500" cy="6" r="1.500" fill="#58b368"/></svg>
<div class="t" style="left:436px;top:406px;font-size:5.800px;color:#f2f2f2">7°C</div>
<div class="t" style="left:449px;top:406px;font-size:5.800px;color:#f2f2f2">Rain showers</div>
<svg style="left:491.500px;top:407px" width="6" height="4" viewBox="0 0 6 4"><path d="M0.500 3.500l2.500-2.700 2.500 2.700" fill="none" stroke="#eee" stroke-width=".8"/></svg>
<svg style="left:502px;top:405.500px" width="28" height="8" viewBox="0 0 28 8"><g fill="none" stroke="#e6e6e6" stroke-width=".8"><rect x="0.800" y="2" width="3.800" height="5"/><path d="M1.800 2V0.800h1.800V2"/><path d="M10.500 6.500a5 5 0 0 1 5-5M12.500 6.500a3 3 0 0 1 3-3M14.500 6.500a1 1 0 0 1 1-1"/><path d="M21.500 5.500h1.500l2-2v5l-2-2M26.300 3l1 3"/></g></svg>
<div class="t" style="left:533.500px;top:406.500px;font-size:5.200px;color:#f2f2f2">РУС</div>
<div class="t" style="left:553.800px;top:401.800px;font-size:5px;color:#f2f2f2">11:46</div>
<div class="t" style="left:548.600px;top:410.600px;font-size:5px;color:#f2f2f2">17.02.2022</div>
<svg style="left:580px;top:405px" width="9" height="9" viewBox="0 0 9 9"><path d="M0.500 0.500h7v5.500h-3l-2 2v-2h-2z" fill="#f2f2f2"/><circle cx="6.800" cy="6.800" r="2" fill="#1f2d3b" stroke="#f2f2f2" stroke-width=".6"/></svg>

</div></div></div>
<!-- PARTICIPANTS -->
<div class="p" style="left:604.5px;top:96.3px;"><svg style="left:0;top:0" width="70.300" height="57.300" viewBox="0 0 70.300 57.300"><rect width="70.300" height="57.300" fill="#787a70"/><g filter="url(#vb4)"><ellipse cx="28" cy="24" rx="20" ry="19" fill="#85877e"/><ellipse cx="56" cy="31" rx="18.500" ry="25" fill="#878a96"/><ellipse cx="50" cy="13" rx="9" ry="5" fill="#9c9ea8"/><ellipse cx="57" cy="34" rx="9.500" ry="11.500" fill="#a19ba4"/><ellipse cx="53" cy="31" rx="2.500" ry="1.200" fill="#6e6a76"/><ellipse cx="62" cy="31" rx="2.500" ry="1.200" fill="#6e6a76"/><path d="M0 49h70.300v9H0z" fill="#2b252b"/><path d="M0 44h12v14H0z" fill="#1c1b1b"/><ellipse cx="33" cy="56" rx="10" ry="3.500" fill="#4a2c5a"/><ellipse cx="52" cy="52" rx="10" ry="5" fill="#6f6b78"/></g></svg>
<div class="m" style="background:rgba(32,33,36,.18)"><svg style="left:2.600px;top:1.800px" width="5" height="6.500" viewBox="0 0 5 6.500"><rect x="1.600" y="0.300" width="1.800" height="3.300" rx=".9" fill="#fff"/><path d="M0.500 2.800a2 2 0 0 0 4 0M2.500 4.800v1.300" fill="none" stroke="#fff" stroke-width=".6"/><path d="M0.300 0.300l4.400 5.700" stroke="#fff" stroke-width=".7"/></svg></div>
<div class="n" style=";letter-spacing:-0.139px;text-align:left;left:8.4px">Валентина Іва...</div></div>
<div class="p" style="left:680.0px;top:96.3px;background:#35383c"><svg style="left:16.800px;top:0" width="36.300" height="57.300" viewBox="0 0 36.300 57.300"><rect width="36.300" height="57.300" fill="#d3d4d6"/><g filter="url(#vb2)"><rect width="36.300" height="12" fill="#c3c9d0"/><rect x="24" y="10" width="12.300" height="36" fill="#dedcda"/><ellipse cx="9.500" cy="26" rx="8.300" ry="13.500" fill="#3d2c2b"/><ellipse cx="10.800" cy="23" rx="4.200" ry="5.600" fill="#d9b5a2"/><path d="M0 57.300c0-12 4-19 11-19s14 5 16 19z" fill="#e9dad6"/><ellipse cx="6" cy="40" rx="4" ry="3.500" fill="#d6b0a0"/><rect x="21.300" y="20.500" width="2" height="4" fill="#6e6a6a"/><path d="M22 50h14.300v7.300H18z" fill="#4a3f3f"/><ellipse cx="8" cy="55" rx="6" ry="3" fill="#cda898"/></g></svg><div class="a" style="inset:0;border:2px solid #5a8fe6;border-radius:4px"></div><div class="a" style="left:54px;top:4.500px;width:11.300px;height:11.300px;border-radius:50%;background:#1f72e4"></div><div class="a" style="left:57.200px;top:8.900px;width:1.100px;height:2.600px;background:#fff;border-radius:.5px"></div><div class="a" style="left:59.100px;top:7.400px;width:1.100px;height:5.600px;background:#fff;border-radius:.5px"></div><div class="a" style="left:61px;top:8.900px;width:1.100px;height:2.600px;background:#fff;border-radius:.5px"></div>
<div class="n" style=";letter-spacing:0.003px;text-align:left;left:8.4px">Антоніна Кост...</div></div>
<div class="p" style="left:755.6px;top:96.3px;"><svg style="left:0;top:0" width="70.300" height="57.300" viewBox="0 0 70.300 57.300"><rect width="70.300" height="57.300" fill="#231f22"/><g filter="url(#vb)"><ellipse cx="38" cy="27" rx="22" ry="20" fill="#5a4652"/><ellipse cx="38" cy="20" rx="14" ry="9" fill="#6a5361"/><ellipse cx="36" cy="38" rx="9" ry="7" fill="#735a63"/><path d="M10 0h56v9c-16-5-34-3-48 6z" fill="#1d191b"/><ellipse cx="9" cy="22" rx="9" ry="20" fill="#201b1e"/><ellipse cx="58" cy="34" rx="5.500" ry="9" fill="#a47c74"/><rect x="63.500" y="21" width="6.800" height="17" fill="#69a6d6"/><rect x="0" y="28" width="5" height="14" fill="#77777a"/><path d="M0 45h70.300v13H0z" fill="#19181a"/><ellipse cx="60" cy="12" rx="8" ry="9" fill="#2a2224"/></g></svg>
<div class="m" style="background:rgba(32,33,36,.18)"><svg style="left:2.600px;top:1.800px" width="5" height="6.500" viewBox="0 0 5 6.500"><rect x="1.600" y="0.300" width="1.800" height="3.300" rx=".9" fill="#fff"/><path d="M0.500 2.800a2 2 0 0 0 4 0M2.500 4.800v1.300" fill="none" stroke="#fff" stroke-width=".6"/><path d="M0.300 0.300l4.400 5.700" stroke="#fff" stroke-width=".7"/></svg></div>
<div class="n" style=";letter-spacing:-0.052px;text-align:left;left:8.4px">Олександра В...</div></div>
<div class="p" style="left:604.5px;top:160.1px;"><div class="av" style="background:#c6cad0"><svg style="left:0;top:0" width="21.400" height="21.400" viewBox="0 0 21.400 21.400"><g filter="url(#vb3)"><ellipse cx="10.500" cy="8.500" rx="6.200" ry="6" fill="#f4f4f4"/><ellipse cx="10.800" cy="10.500" rx="3.200" ry="3.800" fill="#e3c3b3"/><path d="M2 21.400c1-5 5-6.500 8.700-6.500s7.700 1.500 8.700 6.500z" fill="#222224"/><path d="M9 14l1.800 3 1.800-3z" fill="#e3c3b3"/></g></svg></div>
<div class="m" style="background:rgba(32,33,36,.18)"><svg style="left:2.600px;top:1.800px" width="5" height="6.500" viewBox="0 0 5 6.500"><rect x="1.600" y="0.300" width="1.800" height="3.300" rx=".9" fill="#fff"/><path d="M0.500 2.800a2 2 0 0 0 4 0M2.500 4.800v1.300" fill="none" stroke="#fff" stroke-width=".6"/><path d="M0.300 0.300l4.400 5.700" stroke="#fff" stroke-width=".7"/></svg></div>
<div class="n" style=";letter-spacing:0.078px;text-align:left;left:8.4px">Оксана Коміль</div></div>
<div class="p" style="left:680.0px;top:160.1px;"><div class="av" style="background:#0b5a4a">Ю</div>
<div class="m"><svg style="left:2.600px;top:1.800px" width="5" height="6.500" viewBox="0 0 5 6.500"><rect x="1.600" y="0.300" width="1.800" height="3.300" rx=".9" fill="#fff"/><path d="M0.500 2.800a2 2 0 0 0 4 0M2.500 4.800v1.300" fill="none" stroke="#fff" stroke-width=".6"/><path d="M0.300 0.300l4.400 5.700" stroke="#fff" stroke-width=".7"/></svg></div>
<div class="n" style=";letter-spacing:0.227px;text-align:left;left:5.8px">Юлія Романін...</div></div>
<div class="p" style="left:755.6px;top:160.1px;"><div class="av" style="background:#ee6c0a">А</div>
<div class="m"><svg style="left:2.600px;top:1.800px" width="5" height="6.500" viewBox="0 0 5 6.500"><rect x="1.600" y="0.300" width="1.800" height="3.300" rx=".9" fill="#fff"/><path d="M0.500 2.800a2 2 0 0 0 4 0M2.500 4.800v1.300" fill="none" stroke="#fff" stroke-width=".6"/><path d="M0.300 0.300l4.400 5.700" stroke="#fff" stroke-width=".7"/></svg></div>
<div class="n" style=";letter-spacing:-0.024px;text-align:left;left:5.8px">Анастасія Серг...</div></div>
<div class="p" style="left:604.5px;top:223.9px;"><div class="av" style="background:#3f2f66"><svg style="left:0;top:0" width="21.400" height="21.400" viewBox="0 0 21.400 21.400"><g filter="url(#vb3)"><ellipse cx="15" cy="8" rx="6" ry="6" fill="#9474c4"/><ellipse cx="4" cy="9" rx="3" ry="4" fill="#1c1836"/><ellipse cx="10.200" cy="6" rx="1.600" ry="2" fill="#f4e6c8"/><path d="M6 19c0-5 2-10 4.200-10s4.800 5 4.800 10z" fill="#f0dc9c"/><ellipse cx="16" cy="16" rx="4" ry="4" fill="#2a2048"/></g></svg></div>
<div class="m" style="background:rgba(32,33,36,.18)"><svg style="left:2.600px;top:1.800px" width="5" height="6.500" viewBox="0 0 5 6.500"><rect x="1.600" y="0.300" width="1.800" height="3.300" rx=".9" fill="#fff"/><path d="M0.500 2.800a2 2 0 0 0 4 0M2.500 4.800v1.300" fill="none" stroke="#fff" stroke-width=".6"/><path d="M0.300 0.300l4.400 5.700" stroke="#fff" stroke-width=".7"/></svg></div>
<div class="n" style=";letter-spacing:-0.014px;text-align:left;left:8.4px">Сніжана Генна...</div></div>
<div class="p" style="left:680.0px;top:223.9px;"><svg style="left:0;top:0" width="70.300" height="57.300" viewBox="0 0 70.300 57.300"><rect width="70.300" height="57.300" fill="#ded6c2"/><g filter="url(#vb2)"><rect x="40" width="30.300" height="40" fill="#e8e1cf"/><path d="M13 34C11 14 18 1 32 1s20 10 18 26c-.5 6 1 12 2 16H12z" fill="#5b3b2d"/><ellipse cx="27" cy="25" rx="8.600" ry="10.800" fill="#c99b88"/><path d="M17 17c3-7 14-8 20-3-5 0-14 1-20 3z" fill="#6a4636"/><path d="M0 57.300V48c3-9 12-14 20-15l8 8 12-9c12 1 24 8 30.300 16v9.300z" fill="#d1413a"/><path d="M20 33l8 9 10-8c-4 3-14 3-18-1z" fill="#c39584"/><path d="M60 50l10.300-4v11.300H58z" fill="#3b2a2a"/><circle cx="59" cy="9.700" r="5.500" fill="#bdb6a6"/><circle cx="59" cy="9.700" r="2.300" fill="#e6e2d8"/><ellipse cx="3.600" cy="10" rx="2.200" ry="2.200" fill="#f2eee2"/><ellipse cx="3.600" cy="10" rx="2.200" ry="2.200" fill="none" stroke="#8b8476" stroke-width=".5"/></g></svg>
<div class="n" style=";letter-spacing:-0.112px;text-align:left;left:8.4px">Єлизавета Та...</div></div>
<div class="p" style="left:755.6px;top:223.9px;"><div class="av" style="background:#6a22b0"><svg style="left:0;top:0" width="21.400" height="21.400" viewBox="0 0 21.400 21.400"><g filter="url(#vb3)"><ellipse cx="5" cy="8" rx="4" ry="4.500" fill="#e35fc4"/><ellipse cx="12" cy="6" rx="4" ry="4" fill="#9a5fe0"/><ellipse cx="18.500" cy="12" rx="2.500" ry="6" fill="#e070c8"/><ellipse cx="9" cy="12" rx="4" ry="3" fill="#3a0f6a"/><ellipse cx="12" cy="17" rx="5" ry="4" fill="#5a1fb0"/></g></svg></div>
<div class="m" style="background:rgba(32,33,36,.18)"><svg style="left:2.600px;top:1.800px" width="5" height="6.500" viewBox="0 0 5 6.500"><rect x="1.600" y="0.300" width="1.800" height="3.300" rx=".9" fill="#fff"/><path d="M0.500 2.800a2 2 0 0 0 4 0M2.500 4.800v1.300" fill="none" stroke="#fff" stroke-width=".6"/><path d="M0.300 0.300l4.400 5.700" stroke="#fff" stroke-width=".7"/></svg></div>
<div class="n" style=";letter-spacing:-0.011px;text-align:left;left:8.4px">Карина Михай...</div></div>
<div class="p" style="left:604.5px;top:287.7px;"><div class="av" style="background:#f1ede9"><svg style="left:0;top:0" width="21.400" height="21.400" viewBox="0 0 21.400 21.400"><g filter="url(#vb3)"><path d="M4.500 9c0-4 3-6 6.500-6s6.500 2 6.500 6c-2-1.500-4-2-6.500-2s-4.500.5-6.500 2z" fill="#332b2e"/><ellipse cx="11" cy="11" rx="4.500" ry="4" fill="#f6eeea"/><rect x="6" y="8.500" width="10" height="1.800" fill="#3f3638"/><path d="M5 21.400c1-4 3-5 6-5s5 1 6 5z" fill="#d8d0cc"/></g></svg></div>
<div class="m" style="background:rgba(32,33,36,.18)"><svg style="left:2.600px;top:1.800px" width="5" height="6.500" viewBox="0 0 5 6.500"><rect x="1.600" y="0.300" width="1.800" height="3.300" rx=".9" fill="#fff"/><path d="M0.500 2.800a2 2 0 0 0 4 0M2.500 4.800v1.300" fill="none" stroke="#fff" stroke-width=".6"/><path d="M0.300 0.300l4.400 5.700" stroke="#fff" stroke-width=".7"/></svg></div>
<div class="n" style=";letter-spacing:0.038px;text-align:left;left:8.4px">Маргарита Юрі...</div></div>
<div class="p" style="left:680.0px;top:287.7px;"><div class="av" style="background:#5a3d33">А</div>
<div class="m"><svg style="left:2.600px;top:1.800px" width="5" height="6.500" viewBox="0 0 5 6.500"><rect x="1.600" y="0.300" width="1.800" height="3.300" rx=".9" fill="#fff"/><path d="M0.500 2.800a2 2 0 0 0 4 0M2.500 4.800v1.300" fill="none" stroke="#fff" stroke-width=".6"/><path d="M0.300 0.300l4.400 5.700" stroke="#fff" stroke-width=".7"/></svg></div>
<div class="n" style=";letter-spacing:-0.029px;text-align:left;left:5.8px">Антоніна Костя...</div></div>
<div class="p" style="left:755.6px;top:287.7px;"><div class="av" style="background:#cbb894"><svg style="left:0;top:0" width="21.400" height="21.400" viewBox="0 0 21.400 21.400"><g filter="url(#vb3)"><ellipse cx="10" cy="5" rx="7" ry="4" fill="#e2d4b4"/><ellipse cx="8" cy="11.500" rx="4.500" ry="3.500" fill="#b81f1f"/><ellipse cx="13.500" cy="9" rx="2.500" ry="3" fill="#6a3a2a"/><ellipse cx="15" cy="14.500" rx="4" ry="2.500" fill="#7a9a2e"/><ellipse cx="8" cy="16.500" rx="3.500" ry="2" fill="#c8302a"/><ellipse cx="14" cy="12" rx="1.500" ry="1.200" fill="#e8c83a"/></g></svg></div>
<div class="m" style="background:rgba(32,33,36,.18)"><svg style="left:2.600px;top:1.800px" width="5" height="6.500" viewBox="0 0 5 6.500"><rect x="1.600" y="0.300" width="1.800" height="3.300" rx=".9" fill="#fff"/><path d="M0.500 2.800a2 2 0 0 0 4 0M2.500 4.800v1.300" fill="none" stroke="#fff" stroke-width=".6"/><path d="M0.300 0.300l4.400 5.700" stroke="#fff" stroke-width=".7"/></svg></div>
<div class="n" style=";letter-spacing:-0.046px;text-align:left;left:8.4px">Вікторія Олекс...</div></div>
<div class="p" style="left:604.5px;top:351.5px;"><div class="av" style="background:#5f5f63"><svg style="left:0;top:0" width="21.400" height="21.400" viewBox="0 0 21.400 21.400"><g filter="url(#vb3)"><path d="M1 9C3 3 8 1 13 2s8 5 8 9c-3-4-7-6-11-6S4 7 1 9z" fill="#c44fe6"/><path d="M8 3c4-1 9 1 12 6-3-3-7-5-12-6z" fill="#7b45c8"/><ellipse cx="10.500" cy="14" rx="7" ry="5.500" fill="#58585c"/></g></svg></div>
<div class="m" style="background:rgba(32,33,36,.18)"><svg style="left:2.600px;top:1.800px" width="5" height="6.500" viewBox="0 0 5 6.500"><rect x="1.600" y="0.300" width="1.800" height="3.300" rx=".9" fill="#fff"/><path d="M0.500 2.800a2 2 0 0 0 4 0M2.500 4.800v1.300" fill="none" stroke="#fff" stroke-width=".6"/><path d="M0.300 0.300l4.400 5.700" stroke="#fff" stroke-width=".7"/></svg></div>
<div class="n" style=";letter-spacing:-0.105px;text-align:left;left:8.4px">Валерія Сергіїв...</div></div>
<div class="p" style="left:680.0px;top:351.5px;"><div class="av" style="background:#1287d6">В</div>
<div class="m"><svg style="left:2.600px;top:1.800px" width="5" height="6.500" viewBox="0 0 5 6.500"><rect x="1.600" y="0.300" width="1.800" height="3.300" rx=".9" fill="#fff"/><path d="M0.500 2.800a2 2 0 0 0 4 0M2.500 4.800v1.300" fill="none" stroke="#fff" stroke-width=".6"/><path d="M0.300 0.300l4.400 5.700" stroke="#fff" stroke-width=".7"/></svg></div>
<div class="n" style=";letter-spacing:-0.058px;text-align:left;left:5.8px">Валентина Іван...</div></div>
<div class="p" style="left:755.6px;top:351.5px;"><svg style="left:0;top:8.400px" width="70.300" height="40.700" viewBox="0 0 70.300 42" preserveAspectRatio="none"><rect width="70.300" height="42" fill="#2a2d33"/><g filter="url(#vb2)"><rect x="44" width="26.300" height="42" fill="#4c4c4e"/><rect x="50" width="20.300" height="30" fill="#59595b"/><rect x="0" y="8" width="9" height="22" fill="#5f8fd0"/><rect x="0" y="14" width="5" height="14" fill="#9cc0ee"/><path d="M12 42C10 18 16 2 30 2s20 14 18 40z" fill="#4a3128"/><ellipse cx="31" cy="23" rx="10" ry="13" fill="#c7a092"/><ellipse cx="44" cy="36" rx="5" ry="5" fill="#a98670"/><path d="M20 16c3-8 16-9 21-1-6-2-15-1-21 1z" fill="#543a30"/><path d="M16 42c2-5 8-7 14-7s12 2 14 7z" fill="#d9b9b0"/><rect x="0" y="30" width="12" height="12" fill="#1d1f24"/></g></svg>
<div class="m" style="background:rgba(32,33,36,.18)"><svg style="left:2.600px;top:1.800px" width="5" height="6.500" viewBox="0 0 5 6.500"><rect x="1.600" y="0.300" width="1.800" height="3.300" rx=".9" fill="#fff"/><path d="M0.500 2.800a2 2 0 0 0 4 0M2.500 4.800v1.300" fill="none" stroke="#fff" stroke-width=".6"/><path d="M0.300 0.300l4.400 5.700" stroke="#fff" stroke-width=".7"/></svg></div>
<div class="n" style="text-align:left;left:7.500px;bottom:9.500px">Ли...</div></div>
<!-- BOTTOM BAR -->
<div class="t" style="left:12.500px;top:442.300px;font-size:7.600px;font-weight:bold;color:#f1f3f4">16:27</div>
<div class="a" style="left:37.300px;top:441.500px;width:.8px;height:10px;background:#5f6368"></div>
<div class="t" style="left:44px;top:442.300px;font-size:7.600px;font-weight:bold;color:#f1f3f4">hzn-sdwx-der</div>
<div class="a" style="left:336.9px;top:436.700px;width:20px;height:20px;border-radius:50%;background:#ea4335"><svg style="left:6.500px;top:5px" width="7" height="10" viewBox="0 0 7 10"><rect x="2.300" y="0.500" width="2.400" height="5" rx="1.200" fill="#fff"/><path d="M0.800 4.300a2.700 2.700 0 0 0 5.400 0M3.500 7.200v2" fill="none" stroke="#fff" stroke-width=".9"/><path d="M0.300 0.800l6.200 8" stroke="#fff" stroke-width="1"/><path d="M1.100 0.300l6.200 8" stroke="#ea4335" stroke-width=".8"/></svg></div>
<div class="a" style="left:361.7px;top:436.700px;width:20px;height:20px;border-radius:50%;background:#3c4043"><svg style="left:5.500px;top:6.500px" width="9" height="7" viewBox="0 0 9 7"><rect x="0.600" y="0.600" width="5.600" height="5.800" rx=".8" fill="none" stroke="#fff" stroke-width="1.100"/><path d="M6.400 2.800l2.300-1.800v5l-2.300-1.800z" fill="#fff"/></svg></div>
<div class="a" style="left:388.1px;top:436.700px;width:20px;height:20px;border-radius:50%;background:#3c4043"><svg style="left:5.500px;top:4.500px" width="9" height="11" viewBox="0 0 9 11"><path d="M2.200 6V2.200a.7.700 0 0 1 1.400 0V5M3.600 5V1.200a.7.700 0 0 1 1.400 0V5M5 5V1.800a.7.700 0 0 1 1.400 0V5.500M6.400 5.500V3a.7.700 0 0 1 1.400 0v4.500a3 3 0 0 1-3 3h-.6a3 3 0 0 1-2.500-1.400L0.600 7a.7.700 0 0 1 1.200-.8l.4.600" fill="none" stroke="#fff" stroke-width=".9" stroke-linejoin="round"/></svg></div>
<div class="a" style="left:414.0px;top:436.700px;width:20px;height:20px;border-radius:50%;background:#3c4043"><svg style="left:5px;top:6px" width="10" height="8" viewBox="0 0 10 8"><rect x="0.600" y="0.600" width="8.800" height="6.800" rx=".8" fill="none" stroke="#fff" stroke-width="1.100"/><path d="M5 2.200v3.600M3.300 3.800l1.700-1.700 1.700 1.700" fill="none" stroke="#fff" stroke-width="1"/></svg></div>
<div class="a" style="left:439.3px;top:436.700px;width:20px;height:20px;border-radius:50%;background:#3c4043"><div class="a" style="left:9.100px;top:5.500px;width:1.800px;height:1.800px;border-radius:50%;background:#fff"></div><div class="a" style="left:9.100px;top:9.100px;width:1.800px;height:1.800px;border-radius:50%;background:#fff"></div><div class="a" style="left:9.100px;top:12.700px;width:1.800px;height:1.800px;border-radius:50%;background:#fff"></div></div>
<div class="a" style="left:464.200px;top:436.700px;width:28.400px;height:20px;border-radius:10px;background:#ea4335"><svg style="left:8.700px;top:7.500px" width="11" height="5" viewBox="0 0 11 5"><path d="M0.400 3.300C1.700 1.400 3.500.5 5.500.5s3.800.9 5.100 2.800c.2.300.1.600-.1.800l-1 .7c-.3.200-.6.100-.8-.1-.5-.5-1-.9-1.500-1.100-.2-.1-.3-.3-.3-.5V2.300c-.9-.3-1.900-.3-2.800 0v.800c0 .2-.1.400-.3.500-.5.200-1 .6-1.500 1.100-.2.200-.5.300-.8.100l-1-.7c-.2-.2-.3-.5-.1-.8z" fill="#fff"/></svg></div>
<svg style="left:736.500px;top:441.500px" width="10" height="10" viewBox="0 0 10 10"><circle cx="5" cy="5" r="4.200" fill="none" stroke="#fff" stroke-width="1.100"/><path d="M5 4.500v2.800" stroke="#fff" stroke-width="1.200"/><circle cx="5" cy="2.900" r=".7" fill="#fff"/></svg>
<svg style="left:758.500px;top:441.500px" width="12" height="10" viewBox="0 0 12 10"><circle cx="4.200" cy="3" r="1.800" fill="none" stroke="#fff" stroke-width="1"/><path d="M0.600 8.800c0-2 1.600-2.900 3.600-2.900s3.600.9 3.600 2.900z" fill="none" stroke="#fff" stroke-width="1"/><path d="M7.600 1.300a1.800 1.800 0 0 1 0 3.400M9 6.200c1.500.3 2.400 1.200 2.400 2.600H9.600" fill="none" stroke="#fff" stroke-width="1"/></svg>
<div class="a" style="left:766.500px;top:432.500px;width:10px;height:9px;border-radius:4.500px;background:#5f6368"></div><div class="t" style="left:768.300px;top:434.700px;font-size:5px;font-weight:bold;color:#fff">14</div>
<svg style="left:783.500px;top:441.500px" width="10" height="10" viewBox="0 0 10 10"><path d="M0.600 0.800h8.800v6.600H3L0.600 9.600z" fill="none" stroke="#fff" stroke-width="1.100" stroke-linejoin="round"/><path d="M2.300 3h5.400M2.300 5h3.800" stroke="#fff" stroke-width=".9"/></svg>
<div class="a" style="left:791px;top:439.500px;width:4px;height:4px;border-radius:50%;background:#8ab4f8"></div>
<svg style="left:807.500px;top:441px" width="10" height="11" viewBox="0 0 10 11"><path d="M5 0.700l2.300 3.800H2.700z" fill="none" stroke="#fff" stroke-width="1" stroke-linejoin="round"/><rect x="0.700" y="6.300" width="3.400" height="3.400" fill="none" stroke="#fff" stroke-width="1"/><circle cx="7.500" cy="8" r="1.800" fill="none" stroke="#fff" stroke-width="1"/></svg>
</body>
</html>
